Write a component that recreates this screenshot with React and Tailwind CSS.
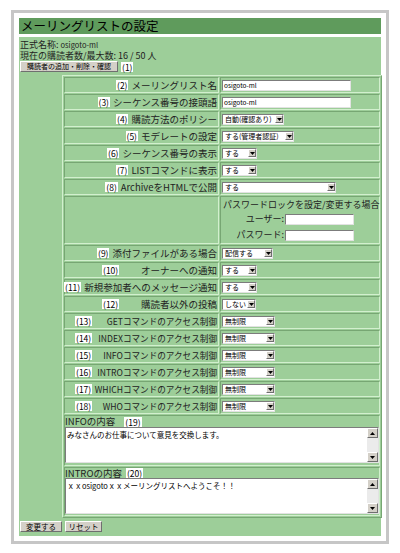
import React from 'react';

const cell = 'bg-[#9dce99] border border-t-[#77a673] border-l-[#77a673] border-b-[#d2efce] border-r-[#d2efce]';
const inset = 'bg-white border border-t-[#7c7c7c] border-l-[#7c7c7c] border-b-[#e2e2e2] border-r-[#e2e2e2]';
const outset = 'bg-[#d4d0c8] border border-t-[#ffffff] border-l-[#ffffff] border-b-[#6f6f6f] border-r-[#6f6f6f]';

const Num = ({ n }) => (
    <span className="bg-white px-[1px] text-[8.5px] leading-[10px] text-black shrink-0">({n})</span>
);

const Arrow = () => (
    <span className={`${outset} w-[8px] h-[8px] flex items-center justify-center shrink-0`}>
        <svg width="5" height="3" viewBox="0 0 5 3"><path d="M0 0h5L2.5 3z" fill="#000" /></svg>
    </span>
);

const Select = ({ text, w }) => (
    <div className={`${inset} ${w} h-[11px] flex items-center`}>
        <span className="flex-1 text-[7px] leading-[9px] pl-[2px] whitespace-nowrap overflow-hidden text-black">{text}</span>
        <Arrow />
    </div>
);

const Input = ({ value, w }) => (
    <div className={`${inset} ${w} h-[11px] text-[6.5px] leading-[9px] pl-[1px] text-black`}>{value}</div>
);

const TextArea = ({ text }) => (
    <div className={`${inset} h-[36px] flex`}>
        <div className="flex-1 text-[7.5px] leading-[11px] pl-[1px] pt-[1px] text-black">{text}</div>
        <div className="w-[11px] bg-[#ebebeb] flex flex-col justify-between">
            <span className={`${outset} h-[10px] flex items-center justify-center`}>
                <svg width="5" height="3" viewBox="0 0 5 3"><path d="M0 3h5L2.5 0z" fill="#000" /></svg>
            </span>
            <span className={`${outset} h-[10px] flex items-center justify-center`}>
                <svg width="5" height="3" viewBox="0 0 5 3"><path d="M0 0h5L2.5 3z" fill="#000" /></svg>
            </span>
        </div>
    </div>
);

const acl = 'pl-[10px] justify-between';

const rows = [
    { n: 2, label: 'メーリングリスト名', value: <Input value="osigoto-ml" w="w-[129px]" /> },
    { n: 3, label: 'シーケンス番号の接頭語', value: <Input value="osigoto-ml" w="w-[129px]" /> },
    { n: 4, label: '購読方法のポリシー', value: <Select text="自動(確認あり)" w="w-[62px]" /> },
    { n: 5, label: 'モデレートの設定', value: <Select text="する(管理者認証)" w="w-[72px]" /> },
    { n: 6, label: 'シーケンス番号の表示', value: <Select text="する" w="w-[35px]" /> },
    { n: 7, label: 'LISTコマンドに表示', value: <Select text="する" w="w-[35px]" /> },
    { n: 8, label: 'ArchiveをHTMLで公開', value: <Select text="する" w="w-[114px]" /> },
];

const rows2 = [
    { n: 9, label: '添付ファイルがある場合', value: <Select text="配信する" w="w-[51px]" /> },
    { n: 10, label: 'オーナーへの通知', pad: 'pl-[37px] justify-between', value: <Select text="する" w="w-[35px]" /> },
    { n: 11, label: '新規参加者へのメッセージ通知', value: <Select text="する" w="w-[35px]" /> },
    { n: 12, label: '購読者以外の投稿', pad: 'pl-[37px] justify-between', value: <Select text="しない" w="w-[34px]" /> },
    { n: 13, label: 'GETコマンドのアクセス制御', pad: acl, small: true, value: <Select text="無制限" w="w-[53px]" /> },
    { n: 14, label: 'INDEXコマンドのアクセス制御', pad: acl, small: true, value: <Select text="無制限" w="w-[53px]" /> },
    { n: 15, label: 'INFOコマンドのアクセス制御', pad: acl, small: true, value: <Select text="無制限" w="w-[53px]" /> },
    { n: 16, label: 'INTROコマンドのアクセス制御', pad: acl, small: true, value: <Select text="無制限" w="w-[53px]" /> },
    { n: 17, label: 'WHICHコマンドのアクセス制御', pad: acl, small: true, value: <Select text="無制限" w="w-[53px]" /> },
    { n: 18, label: 'WHOコマンドのアクセス制御', pad: acl, small: true, value: <Select text="無制限" w="w-[53px]" /> },
];

const Row = ({ row }) => (
    <>
        <div className={`${cell} h-[16px] flex items-center ${row.pad || 'justify-end gap-[3px]'} pr-[1px]`}>
            <Num n={row.n} />
            <span className={`${row.small ? 'text-[8.6px]' : 'text-[9.5px]'} leading-[14px] text-[#222] whitespace-nowrap`}>{row.label}</span>
        </div>
        <div className={`${cell} h-[16px] flex items-center pl-[1px]`}>{row.value}</div>
    </>
);

const App = () => {
    return (
        <div className="bg-white w-[400px] h-[553px] pt-[10px] pl-[11px] font-['Noto_Sans_CJK_JP','Liberation_Sans',sans-serif]">
            <div className="w-[378px] h-[534px] border-[3px] border-[#c6c6c6] p-[5px] flex flex-col">
                <div className="h-[16px] bg-[#5f9b5c] text-[12.5px] leading-[16px] pl-[2px] text-black">メーリングリストの設定</div>
                <div className="h-[3px]" />
                <div className="flex-1 bg-[#9dce99] pt-[2px] flex flex-col">
                    <div className="pl-[1px] h-[11px] text-[9px] leading-[11px] text-[#222] whitespace-nowrap">
                        正式名称: <span className="text-[7.5px]">osigoto-ml</span>
                    </div>
                    <div className="pl-[1px] h-[11px] text-[9px] leading-[11px] text-[#222] whitespace-nowrap">現在の購読者数/最大数: 16 / 50 人</div>
                    <div className="flex items-center gap-[3px] pl-[1px]">
                        <button className={`${outset} h-[11px] w-[98px] text-[7px] leading-[9px] text-black whitespace-nowrap`}>購読者の追加・削除・確認</button>
                        <Num n={1} />
                    </div>
                    <div className="ml-[43px] mt-[3px] w-[320px] grid grid-cols-[155px_160px] gap-[1px] p-[1px] border border-t-[#d2efce] border-l-[#d2efce] border-b-[#77a673] border-r-[#77a673]">
                        {rows.map((r) => <Row key={r.n} row={r} />)}
                        <div className={`${cell} h-[48px]`} />
                        <div className={`${cell} h-[48px] flex flex-col pl-[2px] pt-[2px] text-[9px] leading-[12px] text-[#222]`}>
                            <div className="whitespace-nowrap">パスワードロックを設定/変更する場合</div>
                            <div className="flex items-center justify-end w-[131px] mt-[2px] gap-[1px]">
                                <span>ユーザー:</span>
                                <Input value="" w="w-[69px]" />
                            </div>
                            <div className="flex items-center justify-end w-[131px] mt-[4px] gap-[1px]">
                                <span>パスワード:</span>
                                <Input value="" w="w-[69px]" />
                            </div>
                        </div>
                        {rows2.map((r) => <Row key={r.n} row={r} />)}
                        <div className={`${cell} col-span-2 h-[51px] flex flex-col`}>
                            <div className="flex items-center h-[11px] text-[9.5px] leading-[11px] text-[#222]">
                                <span>INFOの内容</span>
                                <span className="ml-[9px] flex"><Num n={19} /></span>
                            </div>
                            <TextArea text="みなさんのお仕事について意見を交換します。" />
                        </div>
                        <div className={`${cell} col-span-2 h-[49px] flex flex-col`}>
                            <div className="flex items-center h-[10px] text-[9.5px] leading-[10px] text-[#222]">
                                <span>INTROの内容</span>
                                <span className="ml-[4px] flex"><Num n={20} /></span>
                            </div>
                            <TextArea text="ｘｘosigotoｘｘメーリングリストへようこそ！！" />
                        </div>
                    </div>
                    <div className="flex gap-[3px] mt-[3px] pl-[1px]">
                        <button className={`${outset} h-[11px] w-[42px] text-[7.5px] leading-[9px] text-black whitespace-nowrap`}>変更する</button>
                        <button className={`${outset} h-[11px] w-[37px] text-[7.5px] leading-[9px] text-black whitespace-nowrap`}>リセット</button>
                    </div>
                </div>
            </div>
        </div>
    );
};

export default App;
